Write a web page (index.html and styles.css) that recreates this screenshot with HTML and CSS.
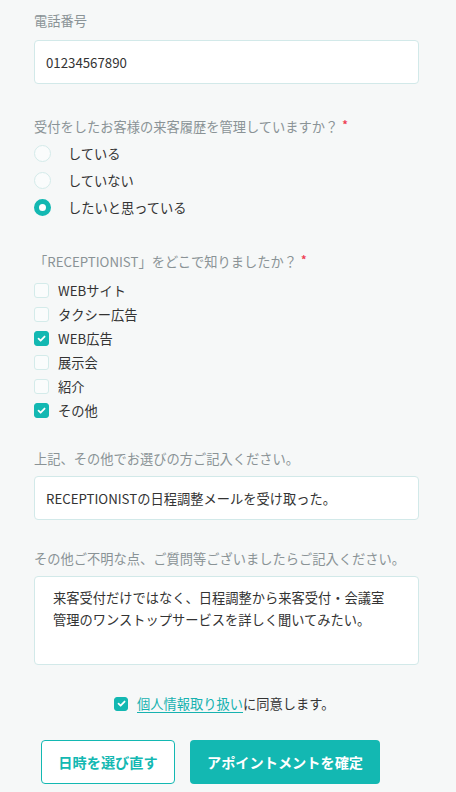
FILE: index.html
```html
<!DOCTYPE html>
<html lang="ja">
<head>
<meta charset="utf-8">
<title>フォーム</title>
<link rel="stylesheet" href="styles.css">
</head>
<body>
<form class="form">
  <div class="group g-tel">
    <div class="label">電話番号</div>
    <div class="input">01234567890</div>
  </div>

  <div class="group g-history">
    <div class="label">受付をしたお客様の来客履歴を管理していますか？<span class="req">*</span></div>
    <div class="radios">
      <div class="radio-row"><span class="radio"></span><span>している</span></div>
      <div class="radio-row"><span class="radio"></span><span>していない</span></div>
      <div class="radio-row"><span class="radio on"></span><span>したいと思っている</span></div>
    </div>
  </div>

  <div class="group g-source">
    <div class="label">「RECEPTIONIST」をどこで知りましたか？<span class="req">*</span></div>
    <div class="checks">
      <div class="check-row"><span class="box"></span><span>WEBサイト</span></div>
      <div class="check-row"><span class="box"></span><span>タクシー広告</span></div>
      <div class="check-row"><span class="box on"><svg viewBox="0 0 10 10"><path d="M2.3 5.2 L4.2 7 L7.8 3.2"/></svg></span><span>WEB広告</span></div>
      <div class="check-row"><span class="box"></span><span>展示会</span></div>
      <div class="check-row"><span class="box"></span><span>紹介</span></div>
      <div class="check-row"><span class="box on"><svg viewBox="0 0 10 10"><path d="M2.3 5.2 L4.2 7 L7.8 3.2"/></svg></span><span>その他</span></div>
    </div>
  </div>

  <div class="group g-other">
    <div class="label">上記、その他でお選びの方ご記入ください。</div>
    <div class="input">RECEPTIONISTの日程調整メールを受け取った。</div>
  </div>

  <div class="group g-question">
    <div class="label">その他ご不明な点、ご質問等ございましたらご記入ください。</div>
    <div class="textarea">来客受付だけではなく、日程調整から来客受付・会議室<br>管理のワンストップサービスを詳しく聞いてみたい。</div>
  </div>

  <div class="consent">
    <span class="box small on"><svg viewBox="0 0 10 10"><path d="M2.3 5.2 L4.2 7 L7.8 3.2"/></svg></span>
    <span><a class="link" href="#">個人情報取り扱い</a>に同意します。</span>
  </div>

  <div class="actions">
    <button type="button" class="btn btn-outline">日時を選び直す</button>
    <button type="button" class="btn btn-primary">アポイントメントを確定</button>
  </div>
</form>
</body>
</html>
```

FILE: styles.css
```css
html, body {
  margin: 0;
  padding: 0;
}
body {
  background: #f6f8f8;
  font-family: "Noto Sans CJK JP", "Noto Sans", sans-serif;
  font-size: 13.25px;
  color: #333;
}
.form {
  width: 385px;
  padding: 11px 0 0 34px;
}
.label {
  height: 20px;
  line-height: 20px;
  color: #8a9396;
  white-space: nowrap;
}
.req {
  color: #ee3f55;
  font-size: 11px;
  font-weight: 700;
  line-height: 0;
  vertical-align: 3px;
  margin-left: 4px;
}
.g-history { margin-top: 33px; }
.g-source { margin-top: 31.5px; }
.g-other { margin-top: 26.5px; }
.g-question { margin-top: 29px; }

.input {
  box-sizing: border-box;
  margin-top: 9px;
  height: 44px;
  background: #fff;
  border: 1px solid #d2e9e9;
  border-radius: 4px;
  padding: 0 11px;
  display: flex;
  align-items: center;
  color: #333;
}
.g-other .input { margin-top: 7px; }

.textarea {
  box-sizing: border-box;
  margin-top: 7px;
  height: 89px;
  background: #fff;
  border: 1px solid #d2e9e9;
  border-radius: 4px;
  padding: 10px 18px;
  line-height: 22px;
  color: #333;
}

.radios { margin-top: 2.5px; }
.radio-row {
  height: 27px;
  display: flex;
  align-items: center;
  gap: 17px;
}
.radio {
  box-sizing: border-box;
  width: 17px;
  height: 17px;
  border-radius: 50%;
  border: 1.5px solid #d4ebea;
  background: #fafcfc;
  flex: none;
}
.radio.on {
  border: 5px solid #13b8b2;
  background: #fff;
}

.checks { margin-top: 6.5px; }
.check-row {
  height: 24px;
  display: flex;
  align-items: center;
  gap: 9px;
}
.box {
  box-sizing: border-box;
  width: 15px;
  height: 15px;
  border-radius: 3px;
  border: 1.5px solid #d4ebea;
  background: #fafcfc;
  flex: none;
  display: flex;
  align-items: center;
  justify-content: center;
}
.box.on {
  background: #13b8b2;
  border-color: #13b8b2;
}
.box svg {
  width: 11px;
  height: 11px;
}
.box path {
  fill: none;
  stroke: #fff;
  stroke-width: 1.6;
  stroke-linecap: round;
  stroke-linejoin: round;
}
.box.small {
  width: 14px;
  height: 14px;
}

.consent {
  margin-top: 28.5px;
  height: 20px;
  display: flex;
  align-items: center;
  gap: 9px;
  padding-left: 80px;
}
.link {
  color: #17b2b0;
  text-decoration: underline;
  text-underline-offset: 3px;
}

.actions {
  margin-top: 26.5px;
  display: flex;
  gap: 15px;
  padding-left: 7px;
}
.btn {
  box-sizing: border-box;
  height: 44px;
  border-radius: 4px;
  font-family: inherit;
  font-size: 14.2px;
  font-weight: 700;
  cursor: pointer;
  padding: 0;
}
.btn-outline {
  width: 134px;
  background: #fff;
  color: #13b8b2;
  border: 1.5px solid #13b8b2;
}
.btn-primary {
  width: 190px;
  background: #13b8b2;
  color: #fff;
  border: none;
}
```
